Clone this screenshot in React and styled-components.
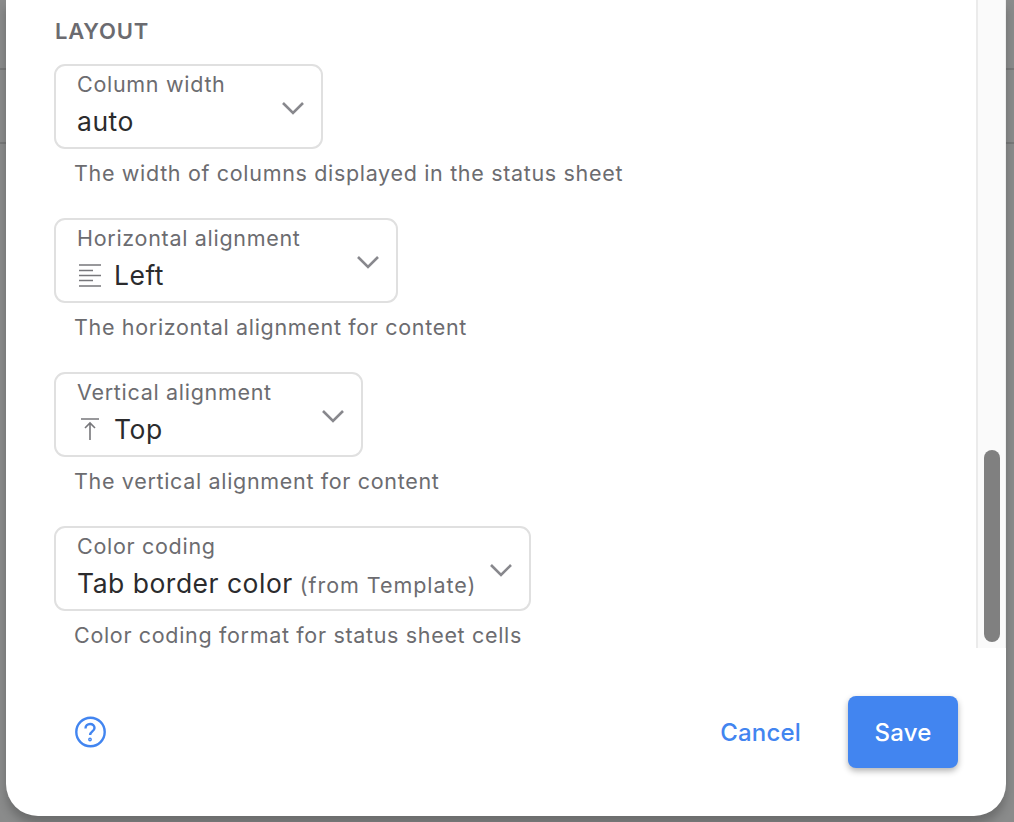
import React from 'react';
import styled, { createGlobalStyle } from 'styled-components';

const GlobalStyle = createGlobalStyle`
  html, body {
    margin: 0;
    padding: 0;
    height: 100%;
    overflow: hidden;
  }
  body {
    font-family: Inter, 'Liberation Sans', sans-serif;
  }
`;

// the page behind the dialog: flat grey with two faint table rules
const Backdrop = styled.div`
  width: 1014px;
  height: 822px;
  box-sizing: border-box;
  padding: 0 8px 6px 6px;
  overflow: hidden;
  background-color: #8a8b8b;
  background-image:
    linear-gradient(#777878, #777878),
    linear-gradient(#777878, #777878);
  background-size: 100% 2px;
  background-position: 0 68px, 0 142px;
  background-repeat: no-repeat;
`;

const Dialog = styled.div`
  height: 816px;
  background: #fff;
  border-radius: 0 0 32px 32px;
  box-shadow: 0 8px 10px rgba(0, 0, 0, 0.22);
  display: flex;
  flex-direction: column;
`;

const Body = styled.div`
  height: 648px;
  display: flex;
`;

const Content = styled.div`
  flex: 1;
  padding: 19px 0 0 48px;
`;

const Heading = styled.h2`
  margin: 0 0 21px 1px;
  font-size: 22px;
  line-height: 24px;
  font-weight: 600;
  letter-spacing: 0.8px;
  color: #6b6b70;
`;

const Scrollbar = styled.div`
  width: 30px;
  box-sizing: border-box;
  background: #fafafa;
  border-left: 2px solid #ebebeb;
  border-right: 1px solid #ededed;
  display: flex;
  align-items: flex-end;
  justify-content: center;
  padding-bottom: 6px;
`;

const Thumb = styled.div`
  width: 16px;
  height: 192px;
  border-radius: 8px;
  background: #808080;
`;

const Field = styled.div`
  margin-bottom: 32px;
`;

const SelectBox = styled.div`
  width: ${(p) => p.$width}px;
  height: 85px;
  box-sizing: border-box;
  border: 2px solid #e0e0e0;
  border-radius: 11px;
  padding: 5px 20px 0 21px;
  position: relative;
`;

const FloatLabel = styled.div`
  font-size: 21.5px;
  line-height: 26px;
  letter-spacing: 0.7px;
  color: #6c6c70;
`;

const Value = styled.div`
  margin-top: 8px;
  display: flex;
  align-items: center;
  gap: 10px;
  font-size: 26.5px;
  line-height: 32px;
  letter-spacing: 0.5px;
  color: #2b2b2d;
`;

const Suffix = styled.span`
  margin-left: 7px;
  font-size: 21.5px;
  letter-spacing: 0.95px;
  color: #6c6c70;
`;

const Chevron = styled.svg`
  position: absolute;
  top: 35px;
  right: 17px;
  width: 22px;
  height: 14px;
  fill: none;
  stroke: #88888d;
  stroke-width: 2.6;
`;

const ValueIcon = styled.svg`
  width: 27px;
  height: 27px;
  fill: none;
  stroke: #77777b;
  stroke-width: 1.6;
`;

const Hint = styled.p`
  margin: 11px 0 0 20px;
  font-size: 21.5px;
  line-height: 26px;
  letter-spacing: 0.67px;
  color: #6c6c70;
`;

const Footer = styled.div`
  flex: 1;
  display: flex;
  align-items: center;
  padding: 0 48px 0 68px;
`;

const HelpIcon = styled.svg`
  width: 34px;
  height: 34px;
  fill: none;
  stroke: #4285f0;
  stroke-width: 2.4;
`;

const Actions = styled.div`
  margin-left: auto;
  display: flex;
  align-items: center;
  gap: 47px;
`;

const CancelButton = styled.button`
  border: 0;
  padding: 0;
  background: none;
  font-family: inherit;
  font-size: 24px;
  font-weight: 500;
  letter-spacing: 0.2px;
  color: #4285f0;
`;

const SaveButton = styled.button`
  width: 110px;
  height: 72px;
  border: 0;
  border-radius: 8px;
  background: #4285f0;
  box-shadow: 0 3px 6px rgba(0, 0, 0, 0.3);
  font-family: inherit;
  font-size: 24px;
  font-weight: 500;
  letter-spacing: 0.2px;
  color: #fff;
`;

const ChevronIcon = () => (
  <Chevron viewBox="0 0 22 14">
    <path d="M1 2l10 10L21 2" />
  </Chevron>
);

const AlignLeftIcon = () => (
  <ValueIcon viewBox="0 0 27 27">
    <path d="M2 3h22M2 8.5h14M2 13.5h22M2 18.5h14M2 24h22" />
  </ValueIcon>
);

const AlignTopIcon = () => (
  <ValueIcon viewBox="0 0 27 27">
    <path d="M4 3h18M13 24V7M8 12l5-5 5 5" />
  </ValueIcon>
);

const fields = [
  {
    label: 'Column width',
    value: 'auto',
    width: 269,
    hint: 'The width of columns displayed in the status sheet',
  },
  {
    label: 'Horizontal alignment',
    value: 'Left',
    icon: <AlignLeftIcon />,
    width: 344,
    hint: 'The horizontal alignment for content',
  },
  {
    label: 'Vertical alignment',
    value: 'Top',
    icon: <AlignTopIcon />,
    width: 309,
    hint: 'The vertical alignment for content',
  },
  {
    label: 'Color coding',
    value: 'Tab border color',
    suffix: '(from Template)',
    width: 477,
    hint: 'Color coding format for status sheet cells',
  },
];

export default function App() {
  return (
    <>
      <GlobalStyle />
      <Backdrop>
        <Dialog>
          <Body>
            <Content>
              <Heading>LAYOUT</Heading>
              {fields.map((field) => (
                <Field key={field.label}>
                  <SelectBox $width={field.width}>
                    <FloatLabel>{field.label}</FloatLabel>
                    <Value>
                      {field.icon}
                      <span>
                        {field.value}
                        {field.suffix && <Suffix>{field.suffix}</Suffix>}
                      </span>
                    </Value>
                    <ChevronIcon />
                  </SelectBox>
                  <Hint>{field.hint}</Hint>
                </Field>
              ))}
            </Content>
            <Scrollbar>
              <Thumb />
            </Scrollbar>
          </Body>
          <Footer>
            <HelpIcon viewBox="0 0 34 34">
              <circle cx="16.5" cy="17" r="14.2" />
              <path d="M11.5 13.5c0-2.8 2-4.5 4.6-4.5s4.4 1.7 4.4 4c0 3.4-4.4 3.4-4.4 7" />
              <circle cx="16" cy="24.5" r="0.7" />
            </HelpIcon>
            <Actions>
              <CancelButton>Cancel</CancelButton>
              <SaveButton>Save</SaveButton>
            </Actions>
          </Footer>
        </Dialog>
      </Backdrop>
    </>
  );
}
